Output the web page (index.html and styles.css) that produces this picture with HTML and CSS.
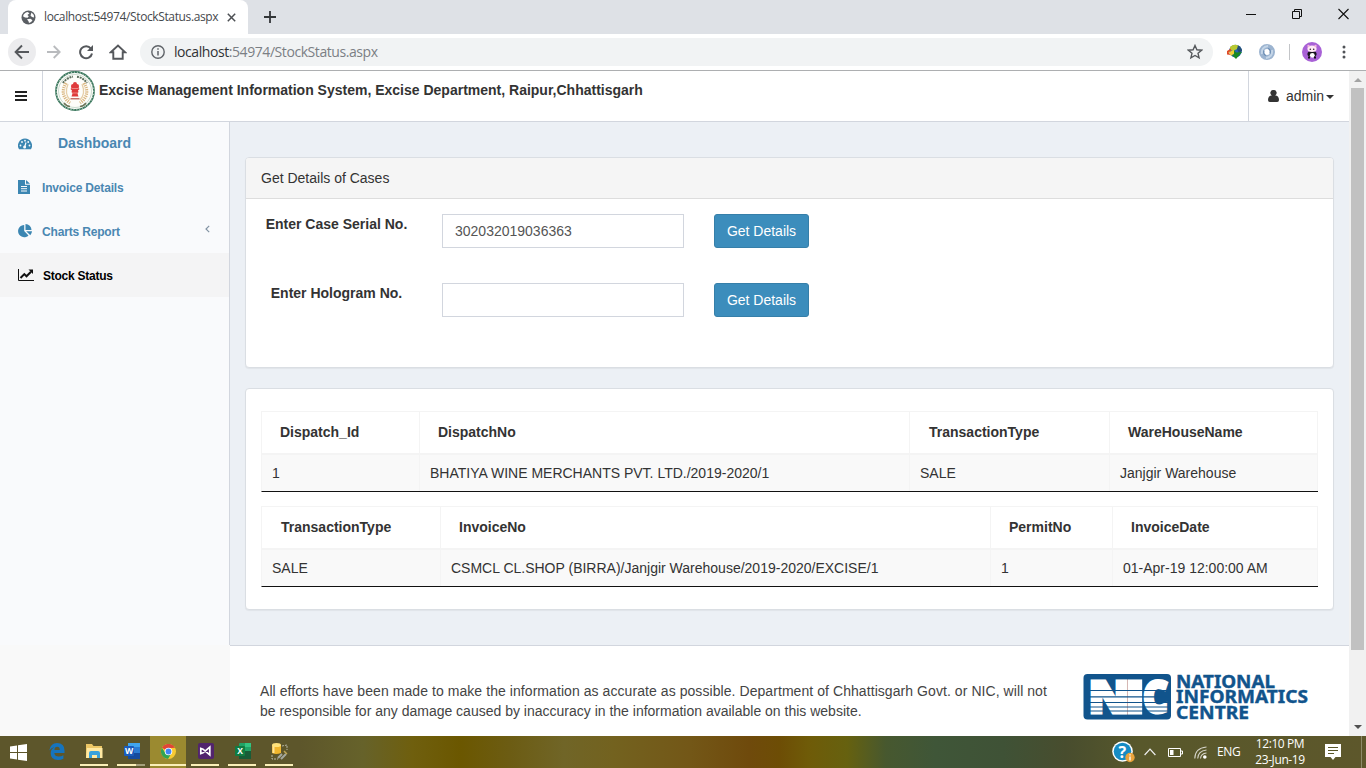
FILE: index.html
```html
<!DOCTYPE html>
<html lang="en">
<head>
<meta charset="utf-8">
<title>StockStatus</title>
<link rel="stylesheet" href="styles.css">
</head>
<body>
<div class="screen">
  <div class="tabstrip">
    <div class="tab">
      <svg class="globe" width="15" height="15" viewBox="0 0 15 15"><circle cx="7.5" cy="7.5" r="7" fill="#5a5e63"/><path d="M2 6.2Q3 2.700 6.500 2L8.500 3.200 6.400 5 7.800 6.200 6.600 7.800 4 7.500Z" fill="#fff"/><path d="M10.500 2.500Q13 4 13 7.500L11 7 9.500 5.500ZM6 9.200L9.500 8.800 11.500 10.200Q10.500 12.500 8 13L7.500 11.200Z" fill="#fff"/></svg>
      <span class="tab-title">localhost:54974/StockStatus.aspx</span>
      <svg class="tab-x" width="9" height="9" viewBox="0 0 9 9"><path d="M.8.8l7.400 7.400M8.200.8L.8 8.200" stroke="#4c4f53" stroke-width="1.500"/></svg>
    </div>
    <svg class="plus" width="12" height="12" viewBox="0 0 12 12"><path d="M6 0v12M0 6h12" stroke="#333639" stroke-width="1.800"/></svg>
    <div class="winbtns">
      <svg width="10" height="12" viewBox="0 0 10 12"><path d="M0 6.500h10" stroke="#111"/></svg>
      <svg width="10" height="12" viewBox="0 0 10 12"><path d="M.5 3.500h7v7h-7zM2.500 3.500v-2h7v7h-2" fill="none" stroke="#111"/></svg>
      <svg width="11" height="12" viewBox="0 0 11 12"><path d="M.5 1l10 10M10.500 1l-10 10" stroke="#111" stroke-width="1.100"/></svg>
    </div>
  </div>
  <div class="toolbar">
    <span class="back"><svg width="16" height="16" viewBox="0 0 16 16"><path d="M15 8H2M8 1.500L1.600 8 8 14.500" fill="none" stroke="#55585c" stroke-width="1.900"/></svg></span>
    <svg class="fwd" width="14" height="14" viewBox="0 0 14 14"><path d="M0 7h12.500M6.700 1L12.700 7l-6 6" fill="none" stroke="#b9bbbe" stroke-width="1.800"/></svg>
    <svg class="reload" width="16" height="16" viewBox="0 0 16 16"><path d="M12.900 4.600A6 6 0 1 0 14 9.500" fill="none" stroke="#55585c" stroke-width="2"/><path d="M15 1v6H9z" fill="#55585c"/></svg>
    <svg class="home" width="18" height="16" viewBox="0 0 18 16"><path d="M1.800 8.300L9 1.500l7.200 6.800H13.700V14.700H4.300V8.300z" fill="none" stroke="#55585c" stroke-width="1.900"/></svg>
    <div class="omnibox">
      <svg width="14" height="14" viewBox="0 0 14 14"><circle cx="7" cy="7" r="6.200" fill="none" stroke="#5f6368" stroke-width="1.400"/><path d="M7 6v4.500M7 3.300v1.500" stroke="#5f6368" stroke-width="1.500"/></svg>
      <span class="url"><b>localhost</b>:54974/StockStatus.aspx</span>
      <svg class="star" width="16" height="16" viewBox="0 0 16 16"><path d="M8 1.500l1.900 4.300 4.700.4-3.600 3.100 1.100 4.600L8 11.500l-4.100 2.400L5 9.300 1.400 6.200l4.700-.4z" fill="none" stroke="#55585c" stroke-width="1.400"/></svg>
    </div>
    <svg class="ext" width="17" height="16" viewBox="0 0 17 16"><circle cx="9.500" cy="7" r="6.300" fill="#2765b5"/><path d="M4 3Q8-1 13 2L11 5 7 7 4 6Z" fill="#b8c932"/><path d="M12 1.500q4 2 4 5.500l-3 2-2-4z" fill="#234f75"/><path d="M1 10.500V7L5 4.500V7L2.500 8.500 5 11z" fill="#df4b26"/><path d="M3 8l5-2 1 3-4 3z" fill="#f0d13a"/><path d="M8 6l2 2.500 6-.5-6 7-4-4 2-.5z" fill="#198a22"/></svg>
    <svg class="ext2" width="16" height="16" viewBox="0 0 16 16"><circle cx="8" cy="8" r="5.500" fill="none" stroke="#9cb4d0" stroke-width="5"/><path d="M3 10Q2 3 9 2M13 6Q14 13 7 14" stroke="#c4d5e7" fill="none" stroke-width="2"/><path d="M9 4.500q3 1 2 5M7 11.500q-3-1-2-5" fill="none" stroke="#6689b1" stroke-width="1.200"/></svg>
    <i class="tsep"></i>
    <svg class="avatar" width="20" height="20" viewBox="0 0 20 20"><circle cx="10" cy="10" r="10" fill="#a861d6"/><ellipse cx="10" cy="12" rx="4.600" ry="3" fill="#15131a"/><ellipse cx="10" cy="6.800" rx="4.600" ry="3.300" fill="#ffe9f6"/><ellipse cx="10.300" cy="13.300" rx="2.400" ry="2.400" fill="#fff"/><path d="M7 14.500v2M13 14.500v2" stroke="#15131a" stroke-width="2"/><circle cx="6.500" cy="4" r="1.200" fill="#f2b4dd"/><circle cx="13.500" cy="4" r="1.200" fill="#f2b4dd"/><circle cx="8.300" cy="7.300" r=".8" fill="#33232e"/><circle cx="11.700" cy="7.300" r=".8" fill="#33232e"/></svg>
    <svg class="dots" width="4" height="14" viewBox="0 0 4 14"><g fill="#505357"><circle cx="2" cy="2" r="1.500"/><circle cx="2" cy="7" r="1.500"/><circle cx="2" cy="12" r="1.500"/></g></svg>
  </div>
  <div class="viewport">
    <div class="page">
      <header class="header">
        <div class="burger"><svg width="12" height="11" viewBox="0 0 12 11"><path d="M0 1h12M0 5h12M0 9h12" stroke="#222" stroke-width="2"/></svg></div>
        <svg class="emblem" width="40" height="40" viewBox="0 0 40 40"><circle cx="20" cy="20" r="19" fill="#fdfdf9" stroke="#39765c" stroke-width="1.800"/><circle cx="20" cy="20" r="18.800" fill="none" stroke="#dce9df" stroke-width="1" stroke-dasharray="1 2"/><circle cx="20" cy="20" r="16.500" fill="none" stroke="#a9c5b4" stroke-width=".6"/><path d="M8 12A14.500 14.500 0 0 1 18 5.700M22 5.700A14.500 14.500 0 0 1 32 12" fill="none" stroke="#5b6f5c" stroke-width="2" stroke-dasharray="2 .8"/><path d="M11 12Q4 24 15 32M29 12Q36 24 25 32" fill="none" stroke="#d9b47c" stroke-width="3.200" stroke-dasharray="1.200 1"/><path d="M13 13Q9 23 15 29M27 13Q31 23 25 29" fill="none" stroke="#e6cfa8" stroke-width="1.300"/><path d="M16 15q0-2 2-2 0-2 2-2t2 2q2 0 2 2l-.3 2 .8 1-1.500 1.500.5 1.500-1 1.500 1 3h-7l1-3-1-1.500.5-1.500-1.500-1.500.8-1z" fill="#df3b3b"/><path d="M16.500 17.500h7M17 22h6" stroke="#f4a7a0" stroke-width=".7"/><path d="M15.500 27.800h9" stroke="#b34038" stroke-width="1.100"/><path d="M9 32q2 3 6 3.500M31 32q-2 3-6 3.500" fill="none" stroke="#6e7659" stroke-width="1.500"/></svg>
        <h1 class="title">Excise Management Information System, Excise Department, Raipur,Chhattisgarh</h1>
        <div class="user"><svg width="11" height="12" viewBox="0 0 11 12"><path d="M5.500 0a2.900 2.900 0 0 1 1.700 5.400Q11 5.500 11 10q0 2-1.800 2H1.800Q0 12 0 10 0 5.500 3.800 5.400A2.900 2.900 0 0 1 5.500 0z" fill="#333"/></svg><span>admin</span><i class="caret"></i></div>
      </header>
      <div class="main">
        <nav class="side">
          <a class="item dash"><svg width="14" height="12" viewBox="0 0 14 12"><path d="M7 .5a7 7 0 0 1 5.900 10.800H1.100A7 7 0 0 1 7 .5z" fill="#3c86b2"/><g fill="#f9fafc"><circle cx="2.500" cy="7.500" r=".9"/><circle cx="4" cy="4" r=".9"/><circle cx="7" cy="2.700" r=".9"/><circle cx="10.200" cy="4" r=".9"/><circle cx="11.500" cy="7.500" r=".9"/><circle cx="6.600" cy="9" r="1.500"/></g><path d="M6.700 9L8 4.500" stroke="#f9fafc" stroke-width="1.200"/></svg><span>Dashboard</span></a>
          <a class="item"><svg width="12" height="14" viewBox="0 0 12 14"><path d="M0 0h7v4.700h5V14H0zM8 0l4 3.700H8z" fill="#3c86b2"/><path d="M3 6.500h6M3 8.700h6M3 11h6" stroke="#f9fafc"/></svg><span>Invoice Details</span></a>
          <a class="item"><svg width="14" height="14" viewBox="0 0 14 14"><path d="M6.200 1v6l4.300 4.400A6.100 6.100 0 1 1 6.200 1zM7.500 0A6 6 0 0 1 13.500 6h-6zM8.200 7.300H14a6 6 0 0 1-1.700 3.900z" fill="#3c86b2"/></svg><span>Charts Report</span><svg class="chev" width="5" height="8" viewBox="0 0 5 8"><path d="M4.200.8L1 4l3.200 3.200" fill="none" stroke="#8293a3" stroke-width="1.200"/></svg></a>
          <a class="item active"><svg width="16" height="13" viewBox="0 0 16 13"><path d="M.5 0v11.500H16" fill="none" stroke="#111"/><path d="M2.500 9L6.300 5.100 8.500 7.300 13 2.700" fill="none" stroke="#111" stroke-width="2"/><path d="M10.500.5H15V5z" fill="#111"/></svg><span>Stock Status</span></a>
        </nav>
        <div class="content">
          <section class="panel search">
            <div class="panel-head">Get Details of Cases</div>
            <div class="row"><label>Enter Case Serial No.</label><div class="input">302032019036363</div><div class="btn">Get Details</div></div>
            <div class="row"><label>Enter Hologram No.</label><div class="input"></div><div class="btn">Get Details</div></div>
          </section>
          <section class="panel results">
            <div class="table t1"><div class="th">Dispatch_Id</div><div class="th">DispatchNo</div><div class="th late">TransactionType</div><div class="th">WareHouseName</div><div class="td">1</div><div class="td">BHATIYA WINE MERCHANTS PVT. LTD./2019-2020/1</div><div class="td">SALE</div><div class="td">Janjgir Warehouse</div></div>
            <div class="table t2"><div class="th late">TransactionType</div><div class="th">InvoiceNo</div><div class="th">PermitNo</div><div class="th">InvoiceDate</div><div class="td">SALE</div><div class="td">CSMCL CL.SHOP (BIRRA)/Janjgir Warehouse/2019-2020/EXCISE/1</div><div class="td">1</div><div class="td">01-Apr-19 12:00:00 AM</div></div>
          </section>
        </div>
      </div>
      <footer class="footer">
        <div class="footer-body">
        <p><span class="wide">All efforts have been made to make the information as accurate as possible. Department of Chhattisgarh Govt. or NIC, will not</span><br>be responsible for any damage caused by inaccuracy in the information available on this website.</p>
        <svg class="nic" width="226" height="48" viewBox="0 0 226 48"><rect x=".5" y="1" width="87.500" height="45.500" rx="4" fill="#11548c"/><g font-family="Open Sans" font-weight="800" font-size="44" fill="#fff" stroke="#fff" stroke-width="3"><text x="5.500" y="39.500" textLength="41" lengthAdjust="spacingAndGlyphs">N</text><text x="42.500" y="39.500" textLength="19" lengthAdjust="spacingAndGlyphs">I</text><text x="60" y="39.500" textLength="25" lengthAdjust="spacingAndGlyphs">C</text></g><path d="M5 17.500h81M5 23.800h81M5 29.500h81M5 34h81M5 38h81" stroke="#11548c" stroke-width="1.200"/><g font-family="Noto Sans" font-weight="700" font-size="17.500" fill="#11548c" stroke="#11548c" stroke-width=".4"><text x="93" y="15" textLength="99" lengthAdjust="spacingAndGlyphs">NATIONAL</text><text x="93" y="30" textLength="132" lengthAdjust="spacingAndGlyphs">INFORMATICS</text><text x="93" y="45.500" textLength="73" lengthAdjust="spacingAndGlyphs">CENTRE</text></g></svg>
        </div>
      </footer>
    </div>
    <div class="scroll"><i class="up"></i><i class="thumb"></i><i class="down"></i></div>
  </div>
  <div class="taskbar">
    <div class="app start"><svg width="17" height="17" viewBox="0 0 17 17"><path d="M0 2.500L7 1.500V8H0zM8 1.300L17 0v8H8zM0 9h7v6.500l-7-1zM8 9h9v8l-9-1.300z" fill="#fff"/></svg></div>
    <div class="app edge"><svg width="16" height="17" viewBox="0 0 16 17"><path d="M.3 7.500Q1.500 0 8 0q7.500 0 7.500 7.500V10H5.300q.4 3.500 4.500 3.500 2.500 0 4.600-1.300v3.500Q12 17 9 17q-7.300 0-7.300-6.700Q1.700 6 5.500 4 2.300 4.600.3 7.500zM5.400 7h5.400q0-3.200-2.600-3.200T5.400 7z" fill="#1674bd"/></svg></div>
    <div class="app run"><svg width="17" height="15" viewBox="0 0 17 15"><path d="M0 0h6l1.500 2H16v12H0z" fill="#ecc766"/><path d="M1 4h15.500v10H0z" fill="#ffe9a2"/><path d="M3 14V9q0-2 2-2h7q2 0 2 2v5h-3v-3H6v3z" fill="#39a2dc"/></svg></div>
    <div class="app run word"><svg width="16" height="16" viewBox="0 0 16 16"><rect x="4" width="12" height="16" rx="1" fill="#2b7cd3"/><path d="M4 0h12v4H4z" fill="#41a5ee"/><path d="M4 10h12v6H4z" fill="#164b9d"/><rect y="3" width="10" height="10" rx="1" fill="#1a5cbd"/><text x="1" y="11" font-family="Open Sans" font-size="8.500" font-weight="700" fill="#fff">W</text></svg></div>
    <div class="app run chrome"><svg width="15" height="15" viewBox="0 0 16 16"><circle cx="8" cy="8" r="8" fill="#f7ca32"/><path d="M8 8L1 4A8 8 0 0 1 15 4L8 4.500z" fill="#df4637"/><path d="M1 4A8 8 0 0 0 7.500 16L11 10H5z" fill="#31a453"/><circle cx="8" cy="8" r="4" fill="#fff"/><circle cx="8" cy="8" r="3.100" fill="#4285f4"/></svg></div>
    <div class="app run"><svg width="16" height="16" viewBox="0 0 16 16"><rect width="16" height="16" rx="2" fill="#52246d"/><path d="M2.800 5.500v5L5 9.800 11.800 4v8L5 6.200z" fill="none" stroke="#fff" stroke-width="1.700"/></svg></div>
    <div class="app run"><svg width="16" height="16" viewBox="0 0 16 16"><rect x="4" width="12" height="16" rx="1" fill="#21a366"/><path d="M10 0h6v4h-6z" fill="#33c481"/><path d="M4 8h12v8H4z" fill="#185c37"/><rect y="3" width="10" height="10" rx="1" fill="#107c41"/><text x="2.200" y="11" font-family="Open Sans" font-size="8.500" font-weight="700" fill="#fff">X</text></svg></div>
    <div class="app run"><svg width="17" height="17" viewBox="0 0 17 17"><path d="M1 2v8q4 2 9 0V2z" fill="#f0b62c"/><path d="M2.500 3v7" stroke="#ffe497" stroke-width="2"/><ellipse cx="5.500" cy="2" rx="4.500" ry="2" fill="#ffe37a"/><path d="M11 3l5-1v5M1 12v4h6" fill="none" stroke="#b9b7a7" stroke-dasharray="2 1"/><path d="M7 15l4-4M10 16l5-5" stroke="#a4a79d" stroke-width="2"/><path d="M13 8l3 3" stroke="#c0a757" stroke-width="1.500"/></svg></div>
    <div class="tray">
      <svg class="help" width="23" height="22" viewBox="0 0 23 22"><circle cx="10.500" cy="10.500" r="10.300" fill="#fff"/><circle cx="10.500" cy="10.500" r="8.800" fill="#168cc4"/><text x="6.500" y="16.500" font-family="Open Sans" font-weight="700" font-size="16" fill="#fff">?</text><circle cx="18" cy="16.500" r="4.700" fill="#e9a33c"/><path d="M18 15.500v4M18 13.200v1.300" stroke="#fff" stroke-width="1.300"/></svg>
      <svg class="arrow" width="12" height="8" viewBox="0 0 12 8"><path d="M.6 7L6 1.200 11.400 7" fill="none" stroke="#eee" stroke-width="1.200"/></svg>
      <svg class="battery" width="15" height="9" viewBox="0 0 15 9"><path d="M.5.5h12v8H.5zM13 3h1.500v3H13" fill="none" stroke="#fff"/><path d="M2 2h3.500v5H2z" fill="#fff"/></svg>
      <svg class="wifi" width="13" height="13" viewBox="0 0 13 13"><g fill="none" stroke="#d6d5ca" stroke-width="1.100"><path d="M.8 12.500Q1 2 12.500 1M3.700 12.500Q4 5 12.500 4M6.500 12.500Q7 7.500 12.500 7"/></g><circle cx="10.800" cy="11" r="1.800" fill="#fff"/></svg>
      <span class="lang">ENG</span>
      <span class="clock"><span>12:10 PM</span><span>23-Jun-19</span></span>
      <svg class="note" width="16" height="16" viewBox="0 0 16 16"><path d="M0 0h16v13h-5.500L8 16l-2.500-3H0z" fill="#fff"/><path d="M3 3.500h10M3 6.500h10M3 9.500h6" stroke="#5a5728"/></svg>
      <i class="peek"></i>
    </div>
  </div>
</div>
</body>
</html>
```
FILE: styles.css
```css
* { box-sizing: border-box; }
body { margin: 0; overflow: hidden; font: 14px/20px "Liberation Sans", Arial, sans-serif; color: #333; }
svg { display: block; flex: none; }
.screen { width: 1366px; height: 768px; display: flex; flex-direction: column; background: #fff; }

.tabstrip { height: 34px; flex: none; background: #dee1e6; display: flex; align-items: flex-start; padding-left: 8px; }
.tab { width: 240px; height: 34px; background: #fff; border-radius: 8px 8px 0 0; display: flex; align-items: center; padding-left: 13px; }
.tab-title { width: 174px; margin-left: 8px; margin-right: 10px; font: 12px/16px "Open Sans", sans-serif; color: #45484c; white-space: nowrap; letter-spacing: -.38px; }
.tab-x { margin-left: -1px; }
.plus { margin: 11px 0 0 16px; }
.winbtns { display: flex; gap: 36px; margin: 8px 17px 0 auto; }

.toolbar { height: 36px; flex: none; display: flex; align-items: center; padding-left: 8px; }
.back { width: 28px; height: 28px; border-radius: 50%; background: #ececee; display: flex; align-items: center; justify-content: center; }
.fwd { margin-left: 11px; }
.reload { margin-left: 17px; }
.home { margin-left: 15px; }
.omnibox { width: 1073px; height: 28px; margin-left: 13px; border-radius: 14px; background: #f1f3f4; display: flex; align-items: center; padding: 0 11px; }
.url { margin-left: 9px; font: 14px/20px "Open Sans", sans-serif; color: #7b7f84; white-space: nowrap; letter-spacing: -.43px; }
.url b { font-weight: 400; color: #303235; }
.star { margin-left: auto; margin-right: -1px; }
.ext { margin-left: 13px; }
.ext2 { margin-left: 16px; }
.tsep { width: 1px; height: 16px; background: #c3c5c8; margin-left: 14px; }
.avatar { margin-left: 12px; }
.dots { margin-left: 20px; }

.viewport { flex: 1; min-height: 0; display: flex; border-top: 1px solid #adafb1; }
.page { width: 1349px; height: 665px; display: flex; flex-direction: column; overflow: hidden; }
.header { height: 51px; flex: none; display: flex; border-bottom: 1px solid #d2d6de; }
.burger { width: 43px; border-right: 1px solid #d2d6de; display: flex; align-items: center; justify-content: center; }
.emblem { margin-left: 12px; }
.title { margin: 9px 0 0 4px; font-size: 14px; line-height: 20px; font-weight: 700; color: #333; white-space: nowrap; }
.user { width: 101px; margin-left: auto; border-left: 1px solid #d2d6de; display: flex; align-items: center; padding-left: 19px; }
.user span { margin-left: 7px; }
.caret { border: 4px solid transparent; border-top-color: #333; border-bottom: 0; margin: 2px 0 0 2px; }

.main { height: 523px; flex: none; display: flex; }
.side { width: 230px; background: #f9fafc; border-right: 1px solid #d2d6de; }
.item { height: 44px; display: flex; align-items: center; padding-left: 18px; font-size: 12px; font-weight: 700; color: #4a87b2; letter-spacing: -.17px; }
.item > svg:first-child { margin-right: 12px; }
.item span { width: 130px; padding-top: 2px; }
.item:nth-child(3) > svg:first-child { margin-right: 10px; }
.item.dash { height: 43px; font-size: 14px; letter-spacing: 0; }
.item.dash > svg:first-child { margin-right: 26px; }
.item.dash span { padding-top: 0; margin-top: -1px; }
.item.active { background: #f4f4f5; color: #000; letter-spacing: -.25px; }
.item.active > svg:first-child { margin-right: 9px; }
.chev { margin: -5px 0 0 33px; }
.content { flex: 1; background: #ecf0f5; padding: 35px 15px 0; }
.panel { background: #fff; border: 1px solid #dadee3; border-radius: 4px; box-shadow: 0 1px 1px rgba(0,0,0,.05); }
.search { height: 211px; }
.panel-head { height: 41px; padding: 10px 15px; background: #f5f5f5; border-bottom: 1px solid #ddd; border-radius: 3px 3px 0 0; margin-bottom: 15px; }
.row { display: flex; height: 34px; margin-bottom: 35px; }
.row label { width: 181px; text-align: center; font-weight: 700; }
.input { width: 242px; margin-left: 15px; border: 1px solid #d2d6de; padding: 6px 12px; color: #555; }
.btn { width: 95px; margin-left: 30px; background: #3c8dbc; border: 1px solid #367fa9; border-radius: 3px; color: #fff; text-align: center; line-height: 32px; }
.results { height: 222px; margin-top: 20px; padding: 22px 15px; }
.table { width: 1057px; display: grid; grid-template-rows: 43px 36px; border-top: 1px solid #f4f4f4; border-left: 1px solid #f4f4f4; border-bottom: 1px solid #111; margin-bottom: 14px; height: 81px; }
.t1 { grid-template-columns: 158px 490px 200px 1fr; }
.t2 { grid-template-columns: 179px 550px 122px 1fr; }
.th { font-weight: 700; padding: 10px 18px; border-right: 1px solid #f4f4f4; border-bottom: 2px solid #f4f4f4; white-space: nowrap; }
.th.late { padding-left: 19px; }
.td { padding: 8px 10px; background: #f9f9f9; border-right: 1px solid #f4f4f4; white-space: nowrap; }
.footer { height: 91px; flex: none; background: #f9f9f9; padding-left: 230px; color: #444; }
.footer-body { height: 91px; background: #fff; border-top: 1px solid #d2d6de; display: flex; padding: 35px 0 0 30px; }
.footer p { margin: 0; width: 823px; white-space: nowrap; }
.wide { letter-spacing: .066px; }
.nic { margin-top: -8px; }
.scroll { width: 17px; background: #f1f1f1; display: flex; flex-direction: column; align-items: center; }
.up { border: 4px solid transparent; border-bottom-color: #a3a3a3; border-top: 0; margin-top: 7px; }
.thumb { width: 13px; height: 562px; background: #c1c1c1; margin-top: 6px; }
.down { border: 4px solid transparent; border-top-color: #505050; border-bottom: 0; margin-top: 75px; }

.taskbar { height: 32px; flex: none; display: flex; background: linear-gradient(90deg, #5d562b 0, #5d562b 300px, #66622a 363px, #6f5f0e 412px, #6b5700 461px, #6c5c13 510px, #706527 564px, #73621f 613px, #735717 690px, #6f4a0c 749px, #6d4d05 779px, #6f5b08 808px, #66610f 847px, #47582f 886px, #3f5638 935px, #3f5236 1003px, #484d2e 1066px, #58582b 1140px, #5d572b 1366px); }
.app { width: 28px; height: 32px; margin-right: 9px; display: flex; align-items: center; justify-content: center; }
.start { margin-left: 4px; margin-right: 11px; }
.edge { padding-bottom: 2px; }
.run { border-bottom: 2px solid #faf0b8; height: 30px; padding-top: 2px; }
.run svg { margin-left: 1px; }
.word { border-bottom: 0; padding-bottom: 2px; background: linear-gradient(90deg, #faf0b8 68%, #a5a07c 68%) 0 100% / 100% 2px no-repeat; }
.chrome { width: 36px; margin: 0 5px 0 -4px; border-bottom: 0; height: 32px; padding: 0 0 2px; background: linear-gradient(#9b8a30 28px, #faf0b8 28px, #faf0b8 30px, #9b8a30 30px); }
.tray { margin-left: auto; display: flex; align-items: center; color: #fff; font: 12px/16px "Open Sans", sans-serif; }
.arrow { margin-left: 9px; }
.battery { margin-left: 12px; }
.wifi { margin-left: 11px; }
.lang { width: 24px; margin-left: 10px; letter-spacing: -.4px; }
.clock { width: 54px; margin-left: 12px; display: flex; flex-direction: column; text-align: center; letter-spacing: -.4px; white-space: nowrap; }
.note { margin-left: 18px; }
.peek { width: 1px; height: 32px; background: #8d8b69; margin: 0 4px 0 20px; }
```
